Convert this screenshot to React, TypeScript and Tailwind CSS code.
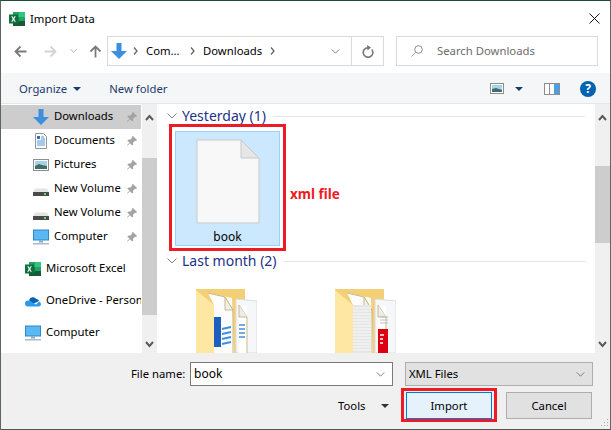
import React from "react";

const Pin = () => (
  <svg width="12" height="12" viewBox="0 0 12 12" className="shrink-0">
    <path d="M7 1l4 4-1 1-1-.3-2 2 .2 1.800-1 1L4 8.200 1.500 10.800 1 10.300 3.500 7.800 1.300 5.500l1-1 1.800.2 2-2L6 1.700z" fill="#a3a3a3" />
  </svg>
);

const ExcelIcon = () => (
  <svg width="16" height="16" viewBox="0 0 16 16" className="shrink-0">
    <rect x="4" y="1" width="12" height="14" fill="#21a366" />
    <rect x="10" y="1" width="6" height="5" fill="#33c481" />
    <rect x="4" y="6" width="6" height="5" fill="#107c41" />
    <rect x="10" y="10" width="6" height="5" fill="#185c37" />
    <rect x="4" y="11" width="6" height="4" fill="#185c37" />
    <rect x="0" y="3.500" width="9" height="9" fill="#0f703b" />
    <path d="M2.200 5.200h1.300l1 1.800 1-1.800h1.300L5.200 8l1.600 2.800H5.500l-1-1.900-1 1.900H2.200L3.800 8z" fill="#fff" />
  </svg>
);

const DownArrow = ({ w = 16 }: { w?: number }) => (
  <svg width={w} height={w} viewBox="0 0 16 16" className="shrink-0">
    <path d="M5.500 0h5v8H16l-8 8-8-8h5.500z" fill="#3a8fe0" />
  </svg>
);

const DocIcon = () => (
  <svg width="16" height="16" viewBox="0 0 16 16" className="shrink-0">
    <path d="M2.500.5h8l3 3v12h-11z" fill="#fff" stroke="#8f97a0" />
    <path d="M4 3h3v3H4z" fill="#2f6fc0" />
    <path d="M8 4h3M8 6h4M4 8h8M4 10h8M4 12h8" stroke="#4f93d8" />
  </svg>
);

const PicIcon = () => (
  <svg width="16" height="16" viewBox="0 0 16 16" className="shrink-0">
    <rect x=".5" y="2.500" width="15" height="11" fill="#fff" stroke="#8e8e8e" />
    <rect x="2" y="4" width="12" height="8" fill="#a9d0ee" />
    <path d="M2 9l4-2 3 1 5 1v3H2z" fill="#3f6f63" />
  </svg>
);

const DriveIcon = () => (
  <svg width="16" height="16" viewBox="0 0 16 16" className="shrink-0">
    <path d="M2 7.500h12l2 3.500H0z" fill="#e4e4e4" />
    <rect x="0" y="11" width="16" height="4" fill="#4a4a4a" />
    <rect x="11" y="12" width="2" height="2" fill="#4be05a" />
  </svg>
);

const PcIcon = () => (
  <svg width="16" height="16" viewBox="0 0 16 16" className="shrink-0">
    <rect x=".5" y="1" width="15" height="10" fill="#5bb8f0" stroke="#2f86c8" />
    <rect x="6" y="11.500" width="4" height="2" fill="#8eaabf" />
    <rect x="0" y="14" width="16" height="1.500" fill="#a9bccb" />
  </svg>
);

const CloudIcon = () => (
  <svg width="16" height="16" viewBox="0 0 16 16" className="shrink-0">
    <path d="M4 7.500a4 4 0 0 1 7.300-1.500A3 3 0 0 1 14 8l-6 3z" fill="#0a5fb8" />
    <path d="M3 13.500a3 3 0 0 1 0-6c2 0 3.500 1 5 2.500l3 1.500 3-3a2.700 2.700 0 0 1 2 2.500c0 1.500-1 2.500-2.500 2.500z" fill="#2a9be8" />
  </svg>
);

const Chev = ({ up, color = "#5a5a5a" }: { up?: boolean; color?: string }) => (
  <svg width="9" height="7" viewBox="0 0 9 7">
    <path d={up ? "M1 6l3.500-4L8 6" : "M1 1l3.500 4L8 1"} fill="none" stroke={color} strokeWidth="2" />
  </svg>
);

const ThinChev = ({ w = 10, h = 6, color = "#777" }: { w?: number; h?: number; color?: string }) => (
  <svg width={w} height={h} viewBox="0 0 10 6" className="shrink-0">
    <path d="M.5.500L5 5 9.500.5" fill="none" stroke={color} />
  </svg>
);

const Crumb = () => (
  <svg width="5" height="8" viewBox="0 0 5 8" className="shrink-0">
    <path d="M1 .5L4 4 1 7.500" fill="none" stroke="#666" strokeWidth="1.300" />
  </svg>
);

const Caret = ({ color = "#1c3a6e" }: { color?: string }) => (
  <svg width="8" height="4" viewBox="0 0 8 4" className="shrink-0">
    <path d="M0 0h8L4 4z" fill={color} />
  </svg>
);

const NavArrow = ({ dir, color }: { dir: "l" | "r" | "u"; color: string }) => (
  <svg width="13" height="13" viewBox="0 0 13 13" className="shrink-0">
    {dir === "l" && <path d="M12.500 6.500H1.500M6.500 1.500l-5 5 5 5" fill="none" stroke={color} strokeWidth="1.800" />}
    {dir === "r" && <path d="M.5 6.500h11M6.500 1.500l5 5-5 5" fill="none" stroke={color} strokeWidth="1.800" />}
    {dir === "u" && <path d="M6.500 12.500v-11M1.500 6.500l5-5 5 5" fill="none" stroke={color} strokeWidth="1.800" />}
  </svg>
);

const SideRow = ({ icon, label, pin, selected, flat }: { icon: React.ReactNode; label: string; pin?: boolean; selected?: boolean; flat?: boolean }) => (
  <div className={`flex h-6 items-center shrink-0 ${flat ? "pl-[24px]" : "pl-[32px]"} ${selected ? "bg-[#cdcdcd]" : ""}`}>
    {icon}
    <span className="ml-[5px] mb-[2px] whitespace-nowrap flex-1 leading-[16px]">{label}</span>
    {pin && <span className="mr-[3px] ml-1"><Pin /></span>}
  </div>
);

const GroupHeader = ({ label, lineWidth }: { label: string; lineWidth: string }) => (
  <div className="flex items-center h-5 pl-[9px]">
    <ThinChev color="#808080" />
    <span className="ml-[5px] text-[14px] text-[#1e3287] whitespace-nowrap leading-[20px]">{label}</span>
    <div className={`ml-[7px] h-px bg-[#e5e5e5] ${lineWidth}`} />
  </div>
);

const Folder = ({ kind }: { kind: "word" | "pdf" }) => (
  <svg width="61" height="64" viewBox="0 0 61 64" className="shrink-0">
    {/* back of the folder */}
    <path d="M0 0h49v64H0z" fill="#f3cf75" />
    {/* rear sheet */}
    <path d="M40 10l21 2v52H40z" fill="#f6f7f8" stroke="#dcdcdc" />
    <path d="M43 16l8 1v47h-8z" fill="#ffffff" />
    <path d="M43 16l8 12v36" fill="none" stroke="#c9b98a" />
    <path d="M43 16v12h8" fill="#ececec" stroke="#c9b98a" />
    {/* front sheet */}
    <path d="M12 4l24 5 2 55H18V16z" fill="#fcfcfc" />
    <path d="M12 4l17 4 8 13v43" fill="none" stroke="#c9b98a" />
    <path d="M29 8v13h8z" fill="#efefef" stroke="#c9b98a" />
    {/* front flap of the folder */}
    <path d="M0 1l18 15v48H0z" fill="#fde7a3" />
    {kind === "word" ? (
      <>
        <rect x="18" y="28" width="7" height="30" fill="#1d5fbf" />
        <path d="M26 40l9-2M26 45l9-2M26 50l9-2M26 55l9-2" stroke="#3d8fdc" strokeWidth="1.800" />
        <path d="M43 36h6M43 40h6M43 44h6M43 48h6" stroke="#4a90d9" strokeWidth="1.600" />
      </>
    ) : (
      <>
        <path d="M18 16h18v48H18z" fill="#e6e6e6" />
        <path d="M18 19h18M18 22h18M18 25h18M18 28h18M18 31h18M18 34h18M18 37h18M18 40h18M18 43h18M18 46h18M18 49h18M18 52h18M18 55h18M18 58h18M18 61h18" stroke="#f8f8f8" />
        <path d="M45 28h8M45 31h8M45 34h8" stroke="#bdbdbd" />
        <rect x="43" y="40" width="10" height="24" fill="#dd0010" />
        <path d="M45 46h4M45 50h3M45 54h3" stroke="#fff" strokeWidth="1.500" />
      </>
    )}
  </svg>
);

export default function App() {
  return (
    <div className="relative flex h-[430px] w-[611px] flex-col overflow-hidden border border-t-[#1d4d38] border-l-[#5c6660] border-r-[#666] border-b-[#555] bg-white text-[11.3px] text-black [font-family:'Noto_Sans',sans-serif] leading-[16px]">
      {/* Title bar */}
      <div className="flex h-[35px] shrink-0 items-center pl-2 pr-[10px]">
        <ExcelIcon />
        <span className="ml-[5px] flex-1">Import Data</span>
        <svg width="11" height="11" viewBox="0 0 11 11">
          <path d="M.5.500l10 10M10.500.5l-10 10" stroke="#111" strokeWidth="1" fill="none" />
        </svg>
      </div>

      {/* Navigation */}
      <div className="flex h-[37px] shrink-0 items-start">
        <div className="flex h-[30px] w-[106px] items-center pl-[13px]">
          <NavArrow dir="l" color="#7a7a7a" />
          <span className="ml-[17px]"><NavArrow dir="r" color="#d4d4d4" /></span>
          <span className="ml-[13px]"><ThinChev w={7} h={4} color="#8a8a8a" /></span>
          <span className="ml-[12px]"><NavArrow dir="u" color="#7a7a7a" /></span>
        </div>
        <div className="flex h-[30px] w-[277px] items-center border border-[#d9d9d9] pl-[3px]">
          <DownArrow />
          <span className="ml-[6px]"><Crumb /></span>
          <span className="ml-[8px] w-[36px]">Com...</span>
          <span className="ml-[8px]"><Crumb /></span>
          <span className="ml-[8px]">Downloads</span>
          <span className="ml-[8px]"><Crumb /></span>
          <span className="ml-auto mr-[11px]"><ThinChev w={9} h={5} color="#666" /></span>
          <div className="flex h-full w-[32px] items-center justify-center border-l border-[#d9d9d9]">
            <svg width="12" height="13" viewBox="0 0 12 13">
              <path d="M9.800 4.500A4.800 4.800 0 1 1 6 2.700" fill="none" stroke="#777" strokeWidth="1.600" />
              <path d="M5 0l4 2.500L5.500 5.500z" fill="#777" />
            </svg>
          </div>
        </div>
        <div className="ml-[12px] flex h-[30px] w-[202px] items-center border border-[#d9d9d9] pl-[14px] text-[#6d6d6d]">
          <svg width="12" height="12" viewBox="0 0 12 12" className="shrink-0">
            <circle cx="7.500" cy="4.500" r="3.800" fill="none" stroke="#8a8a8a" />
            <path d="M4.800 7.300L.5 11.500" stroke="#b38ca0" />
          </svg>
          <span className="ml-[14px]">Search Downloads</span>
        </div>
      </div>

      {/* Toolbar */}
      <div className="flex h-[30px] shrink-0 items-center bg-[#f5f6f7] pl-[18px] pt-px text-[#1c3a6e]">
        <span>Organize</span>
        <span className="ml-[6px]"><Caret /></span>
        <span className="ml-[28px]">New folder</span>
        <div className="ml-auto flex items-center pr-[14px]">
          <svg width="14" height="11" viewBox="0 0 14 11" className="shrink-0">
            <rect x=".5" y=".5" width="13" height="10" fill="#fff" stroke="#8e8e8e" />
            <rect x="2" y="2" width="10" height="7" fill="#a9d0ee" />
            <path d="M2 6l4-1 6 2v2H2z" fill="#3f6f63" />
          </svg>
          <span className="ml-[11px]"><Caret /></span>
          <svg width="16" height="12" viewBox="0 0 16 12" className="ml-[21px] shrink-0">
            <rect x=".5" y=".5" width="15" height="11" fill="#fff" stroke="#8c8c8c" />
            <rect x="10" y="1" width="5" height="10" fill="#4a9fe8" />
            <rect x="5" y="1" width="1" height="10" fill="#8c8c8c" />
          </svg>
          <div className="ml-[20px] flex h-4 w-4 items-center justify-center rounded-full bg-[#0063b1] text-[12px] font-bold text-white">?</div>
        </div>
      </div>

      {/* Main */}
      <div className="flex h-[250px] shrink-0 border-t border-[#e6e6e6]">
        {/* Sidebar */}
        <div className="flex w-[140px] shrink-0 flex-col overflow-hidden pt-px">
          <SideRow icon={<DownArrow />} label="Downloads" pin selected />
          <SideRow icon={<DocIcon />} label="Documents" pin />
          <SideRow icon={<PicIcon />} label="Pictures" pin />
          <SideRow icon={<DriveIcon />} label="New Volume" pin />
          <SideRow icon={<DriveIcon />} label="New Volume" pin />
          <SideRow icon={<PcIcon />} label="Computer" pin />
          <div className="h-2 shrink-0" />
          <SideRow icon={<ExcelIcon />} label="Microsoft Excel" flat />
          <div className="h-2 shrink-0" />
          <SideRow icon={<CloudIcon />} label="OneDrive - Personal" flat />
          <div className="h-2 shrink-0" />
          <SideRow icon={<PcIcon />} label="Computer" flat />
        </div>
        {/* Sidebar scrollbar */}
        <div className="ml-px flex w-[15px] shrink-0 flex-col bg-[#f0f0f0]">
          <div className="flex h-[54px] justify-center pt-[10px]"><Chev up /></div>
          <div className="h-[157px] bg-[#cdcdcd]" />
          <div className="mt-auto flex justify-center pb-[5px]"><Chev /></div>
        </div>
        {/* Content */}
        <div className="ml-px flex min-w-0 flex-1 flex-col pt-[2px]">
          <GroupHeader label="Yesterday (1)" lineWidth="w-[312px]" />
          <div className="ml-[17px] mt-[5px] flex h-[116px] w-[105px] flex-col items-center border border-[#99d1ff] bg-[#cce8ff]">
            <svg width="64" height="86" viewBox="0 0 64 86" className="mt-[7px] shrink-0">
              <path d="M1 1h44l18 18v65H1z" fill="#f8f8f8" stroke="#c9c9c9" />
              <path d="M45 1v18h18z" fill="#e6e6e6" stroke="#c9c9c9" />
            </svg>
            <span className="mt-[4px] text-[12px]">book</span>
          </div>
          <div className="mt-[5px]"><GroupHeader label="Last month (2)" lineWidth="w-[302px]" /></div>
          <div className="ml-[38px] mt-[18px] flex gap-[78px]">
            <Folder kind="word" />
            <Folder kind="pdf" />
          </div>
        </div>
        {/* Main scrollbar */}
        <div className="flex w-[15px] shrink-0 flex-col bg-[#f0f0f0]">
          <div className="flex h-[62px] justify-center pt-[10px]"><Chev up /></div>
          <div className="h-[77px] bg-[#cdcdcd]" />
          <div className="mt-auto flex justify-center pb-[5px]"><Chev /></div>
        </div>
      </div>

      {/* Bottom */}
      <div className="flex flex-1 flex-col bg-[#f0f0f0] pt-[9px]">
        <div className="flex items-center">
          <span className="ml-[130px] w-[59px]">File name:</span>
          <div className="flex h-6 w-[203px] items-center border border-[#7a7a7a] bg-white pl-[3px] pr-[7px]">
            <span className="flex-1 text-[12px]">book</span>
            <ThinChev w={9} h={5} color="#666" />
          </div>
          <div className="ml-[12px] flex h-6 w-[188px] items-center border border-[#adadad] bg-[#e1e1e1] pl-[3px] pr-[7px]">
            <span className="flex-1">XML Files</span>
            <ThinChev w={9} h={5} color="#666" />
          </div>
        </div>
        <div className="mt-[6px] flex items-center">
          <span className="ml-[337px] w-[28px]">Tools</span>
          <span className="ml-[15px]"><Caret color="#333" /></span>
          <div className="ml-[17px] flex h-[27px] w-[86px] items-center justify-center border border-[#0078d7] bg-[#e5f1fb]">Import</div>
          <div className="ml-[14px] flex h-[27px] w-[86px] items-center justify-center border border-[#adadad] bg-[#e1e1e1]">Cancel</div>
        </div>
      </div>

      {/* Annotations */}
      <div className="absolute left-[168px] top-[123px] h-[127px] w-[117px] border-[3px] border-[#ed1c24]" />
      <span className="absolute left-[289px] top-[184px] text-[13.5px] leading-[18px] font-bold text-[#ed1c24]">xml file</span>
      <div className="absolute left-[400px] top-[387px] h-[34px] w-[96px] border-[3px] border-[#ed1c24]" />
      <svg width="10" height="10" viewBox="0 0 10 10" className="absolute bottom-[1px] right-[1px]">
        <path d="M8 1h1v1H8zM5 4h1v1H5zM8 4h1v1H8zM2 7h1v1H2zM5 7h1v1H5zM8 7h1v1H8z" fill="#a8a8a8" />
      </svg>
    </div>
  );
}
